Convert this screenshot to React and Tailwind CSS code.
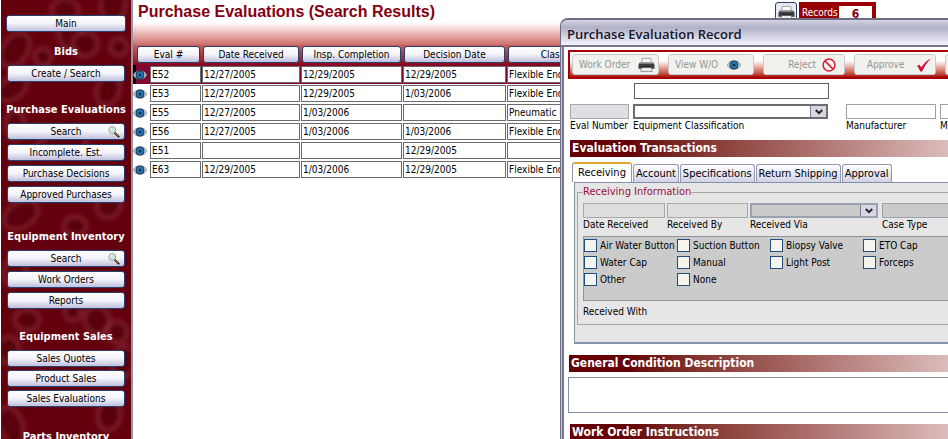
import React, { useState } from 'react';
import clsx from 'clsx';

const menuGroups = [
  { title: 'Bids', space: 'mt-2.5', gap: 'gap-1', items: ['Create / Search'] },
  { title: 'Purchase Evaluations', space: 'mt-[18px]', gap: 'gap-1', items: ['Search', 'Incomplete. Est.', 'Purchase Decisions', 'Approved Purchases'] },
  { title: 'Equipment Inventory', space: 'mt-6', gap: 'gap-1', items: ['Search', 'Work Orders', 'Reports'] },
  { title: 'Equipment Sales', space: 'mt-[18px]', gap: 'gap-[3px]', items: ['Sales Quotes', 'Product Sales', 'Sales Evaluations'] },
  { title: 'Parts Inventory', space: 'mt-5', gap: 'gap-[3px]', items: [] },
];

const columns = ['Eval #', 'Date Received', 'Insp. Completion', 'Decision Date', 'Classification'];

const rows = [
  ['E52', '12/27/2005', '12/29/2005', '12/29/2005', 'Flexible Endoscope'],
  ['E53', '12/27/2005', '12/29/2005', '1/03/2006', 'Flexible Endoscope'],
  ['E55', '12/27/2005', '1/03/2006', '', 'Pneumatic Equipment'],
  ['E56', '12/27/2005', '1/03/2006', '1/03/2006', 'Flexible Endoscope'],
  ['E51', '', '', '12/29/2005', ''],
  ['E63', '12/29/2005', '1/03/2006', '12/29/2005', 'Flexible Endoscope'],
];

const tabs = ['Receiving', 'Account', 'Specifications', 'Return Shipping', 'Approval'];

const receivedWith = [
  'Air Water Button', 'Suction Button', 'Biopsy Valve', 'ETO Cap',
  'Water Cap', 'Manual', 'Light Post', 'Forceps',
  'Other', 'None',
];

// rings of the sidebar texture: cx, cy, rx, ry, rotation
const rings = [
  [14, 50, 8, 14, 35], [64, 10, 9, 6, 0], [70, 36, 7, 12, -30], [84, 44, 8, 8, 0], [118, 47, 4, 4, 0], [42, 57, 4, 4, 0],
  [12, 88, 6, 12, 50], [107, 90, 7, 11, 20], [112, 6, 8, 10, 10], [14, 125, 5, 10, 0], [60, 145, 22, 7, -15],
  [108, 205, 7, 9, 40], [20, 215, 8, 14, 60], [74, 226, 7, 5, 0], [26, 320, 8, 6, 0], [96, 320, 8, 9, 0],
  [72, 312, 4, 4, 0], [14, 270, 6, 12, 20], [116, 332, 6, 6, 0], [108, 415, 7, 11, 10], [10, 425, 7, 14, -20],
  [122, 362, 6, 12, 10], [8, 350, 6, 9, 0],
];

const EyeIcon = ({ className }) => (
  <svg className={className} viewBox="0 0 14 10">
    <ellipse cx="7" cy="5" rx="6.300" ry="4" fill="#f0f4f6" stroke="#6f7d89" strokeWidth="0.900" />
    <circle cx="7" cy="5" r="4" fill="#2b79b8" stroke="#1b3550" strokeWidth="1.200" />
    <circle cx="7" cy="5" r="1.600" fill="#10385c" />
  </svg>
);

const PrinterIcon = ({ className }) => (
  <svg className={className} viewBox="0 0 18 16">
    <path d="M4.5 1h9l.8 5H3.7z" fill="#f6f6f6" stroke="#8b8b8b" strokeWidth="0.8" />
    <path d="M1.5 5.500h15l1 2.500v4h-17v-4z" fill="#3c4045" />
    <path d="M2 5.500h14l.6 1.500H1.400z" fill="#7d8287" />
    <path d="M4 10.500h10l1 4.500H3z" fill="#ececec" stroke="#777" strokeWidth="0.8" />
    <path d="M3.600 10h10.800" stroke="#111" strokeWidth="1" />
  </svg>
);

const MagnifierIcon = ({ className }) => (
  <svg className={className} viewBox="0 0 13 13">
    <path d="M7.500 7.500l4 4" stroke="#3c2a14" strokeWidth="2.200" strokeLinecap="round" />
    <path d="M7.200 7l3.500 3.500" stroke="#c08a3c" strokeWidth="0.9" />
    <circle cx="4.600" cy="4.400" r="3.600" fill="#cfe6dc" stroke="#9aa79f" strokeWidth="1.100" />
    <path d="M2.600 4a2 2 0 0 1 2-1.800" stroke="#fff" strokeWidth="0.9" fill="none" />
  </svg>
);

const RejectIcon = ({ className }) => (
  <svg className={className} viewBox="0 0 14 14">
    <circle cx="7" cy="7" r="5.900" fill="none" stroke="#dd1b2f" strokeWidth="1.500" />
    <path d="M2.900 2.900l8.200 8.200" stroke="#dd1b2f" strokeWidth="1.500" />
  </svg>
);

const ApproveIcon = ({ className }) => (
  <svg className={className} viewBox="0 0 16 15">
    <path d="M.5 8.500L3 7.300q1.600 1.500 2 3Q9 3.500 15.500.5 9.500 6 6 14.500H4Q2.800 10.500.5 8.500z" fill="#cf0f35" />
  </svg>
);

const Sidebar = () => (
  <aside className="relative w-[133px] shrink-0 overflow-hidden border-l border-r-2 border-l-white border-r-[#9a93a6] bg-[#64000e]">
    <svg className="absolute inset-0 h-[439px] w-full blur-[2px]" viewBox="0 0 130 439" preserveAspectRatio="none">
      {rings.map(([cx, cy, rx, ry, rot], i) => (
        <g key={i} transform={`rotate(${rot} ${cx} ${cy})`}>
          <ellipse cx={cx} cy={cy} rx={rx + 4} ry={ry + 4} fill="none" stroke="#9c3a48" strokeWidth="6" opacity="0.4" />
          <ellipse cx={cx} cy={cy} rx={rx} ry={ry} fill="#5f000d" stroke="#3f0006" strokeWidth="2" />
        </g>
      ))}
    </svg>
    <nav className="relative flex flex-col px-[5px] pt-[15px]">
      <MenuButton label="Main" />
      {menuGroups.map((group) => (
        <section key={group.title} className={clsx('flex flex-col', group.space)}>
          <h2 className="mb-[3px] h-5 text-center text-[11px] leading-5 font-bold whitespace-nowrap text-white">{group.title}</h2>
          <div className={clsx('flex flex-col px-px', group.gap)}>
            {group.items.map((item) => <MenuButton key={item} label={item} />)}
          </div>
        </section>
      ))}
    </nav>
  </aside>
);

const MenuButton = ({ label }) => (
  <button className="relative flex h-[17px] items-center justify-center rounded-[3px] border border-[#27406f] bg-linear-to-b from-white via-[#f3f3fa] to-[#bfc0dc] text-[10px] leading-3 text-black">
    {label}
    {label === 'Search' && <MagnifierIcon className="absolute right-1 size-3" />}
  </button>
);

const ResultsTable = () => (
  <table className="w-full table-fixed border-collapse text-[10px] leading-3">
    <colgroup>
      <col className="w-[17px]" />
      <col className="w-[52px]" />
      <col className="w-[99px]" />
      <col className="w-[102px]" />
      <col className="w-[104px]" />
      <col className="w-[128px]" />
      <col />
    </colgroup>
    <thead>
      <tr className="bg-linear-to-b from-[#c4605f] to-[#8a0018]">
        {columns.map((name, i) => (
          <th key={name} colSpan={i === 0 ? 2 : 1} className={clsx('pt-px pr-0.5 pb-0.5 font-normal', i === 0 ? 'pl-1' : 'pl-px')}>
            <button className="block h-[17px] w-full rounded-[3px] border border-[#27406f] bg-linear-to-b from-white via-[#f3f3fa] to-[#bfc0dc]">{name}</button>
          </th>
        ))}
        <th />
      </tr>
    </thead>
    <tbody>
      {rows.map((row, i) => (
        <tr key={row[0]} className={clsx(i === 0 && 'bg-[#82062f]')}>
          <td className={clsx('p-0', i === 0 && 'bg-linear-to-r from-black from-15% to-[#82062f] to-15%')}>
            <EyeIcon className="h-2.5 w-3.5" />
          </td>
          {row.map((value, j) => (
            <td key={j} className="py-px pr-px pl-0">
              <div className="h-[17px] overflow-hidden border border-[#6b6b6b] bg-white px-px leading-[15px] whitespace-nowrap">{value}</div>
            </td>
          ))}
          <td />
        </tr>
      ))}
    </tbody>
  </table>
);

const Field = ({ id, label, select, className, boxClass }) => (
  <div className={clsx('flex shrink-0 flex-col', className)}>
    <div className="relative flex">
      {select ? (
        <>
          <select id={id} className={clsx('h-[15px] w-full appearance-none border-2', boxClass)} />
          <span className="pointer-events-none absolute inset-y-0.5 right-0.5 flex w-4 items-center justify-center border-l border-[#7c7c92] bg-[#d6d6e4]">
            <svg className="h-1.5 w-2" viewBox="0 0 8 6"><path d="M.8 1L4 4.200 7.200 1" fill="none" stroke="#222" strokeWidth="2" /></svg>
          </span>
        </>
      ) : (
        <input id={id} type="text" className={clsx('h-[15px] w-full border px-1', boxClass)} />
      )}
    </div>
    <label htmlFor={id} className="text-[10px] leading-[14px] whitespace-nowrap">{label}</label>
  </div>
);

const SectionBar = ({ children }) => (
  <h3 className="h-[17px] bg-linear-to-r from-[#650006] from-15% to-[#dcbcbc] pl-0.5 text-[12px] leading-4 font-bold whitespace-nowrap text-white">{children}</h3>
);

const ToolButton = ({ children, className }) => (
  <button disabled className={clsx('flex h-[21px] shrink-0 items-center rounded-[3px] border border-[#c9c9c9] bg-[#f1f1ee] text-[10px] text-[#96968f]', className)}>
    {children}
  </button>
);

const RecordWindow = () => {
  const [tab, setTab] = useState('Receiving');

  return (
    <section className="absolute top-[18px] right-0 bottom-0 left-[560px] flex flex-col overflow-hidden rounded-tl-lg border-t-2 border-l border-[#6c6c84] bg-[#c9c9dc]">
      <h2 className="h-[27px] shrink-0 border-b-2 border-[#75758f] bg-linear-to-b from-[#d4d4e2] via-[#b0b0c8] via-30% to-[#f4f4fa] pl-1.5 font-['Open_Sans',sans-serif] text-[13px] leading-7 font-semibold text-[#15152b]">
        Purchase Evaluation Record
      </h2>
      <div className="ml-px flex-1 border-l-2 border-[#75758f] bg-white pt-[3px] pl-1">
        <div className="flex h-[29px] items-center gap-[9px] overflow-hidden border-2 border-r-0 border-[#a80006] bg-linear-to-b from-white from-35% to-[#a80006] pl-0.5">
          <ToolButton className="w-[87px] justify-between pr-[3px] pl-1.5">Work Order<PrinterIcon className="h-4 w-[17px]" /></ToolButton>
          <ToolButton className="w-[86px] justify-between pr-3 pl-1.5">View W/O<EyeIcon className="h-2.5 w-3.5" /></ToolButton>
          <ToolButton className="w-[82px] justify-end gap-1.5 pr-2">Reject<RejectIcon className="size-3.5" /></ToolButton>
          <ToolButton className="w-[82px] justify-between pr-[3px] pl-3">Approve<ApproveIcon className="h-3.5 w-4" /></ToolButton>
          <ToolButton className="w-[82px]" />
        </div>

        <div className="mt-1 flex pl-[66px]">
          <input aria-label="Record" type="text" className="h-4 w-[195px] border border-[#5f5f5f]" />
        </div>
        <div className="mt-[5px] flex pl-0.5">
          <Field id="eval" label="Eval Number" className="mr-1 w-[59px]" boxClass="border-[#a9a9a9] bg-[#dfdfe3]" />
          <Field id="class" label="Equipment Classification" select className="mr-[18px] w-[195px]" boxClass="border-[#6d6d6d] bg-white" />
          <Field id="maker" label="Manufacturer" className="mr-1 w-[90px]" boxClass="border-[#a0a0a0] bg-white" />
          <Field id="model" label="Model" className="w-[90px]" boxClass="border-[#a0a0a0] bg-white" />
        </div>

        <div className="mt-[7px] pl-0.5">
          <SectionBar>Evaluation Transactions</SectionBar>
        </div>

        <div role="tablist" className="mt-[5px] flex h-5 items-end gap-px pl-1">
          {tabs.map((name) => (
            <button
              key={name}
              role="tab"
              aria-selected={tab === name}
              onClick={() => setTab(name)}
              className={clsx(
                'shrink-0 rounded-t-[3px] border border-b-0 border-[#9298ad] text-[11px] leading-4 whitespace-nowrap',
                tab === name ? 'h-5 border-t-2 border-t-[#e9a534] bg-white px-[5px]' : 'h-[18px] bg-linear-to-b from-white to-[#d2d2e6] px-0.5'
              )}
            >
              {name}
            </button>
          ))}
        </div>

        <div className="ml-1.5 h-[162px] border border-r-0 border-b-2 border-[#8492a8] bg-[#e6e6e6] pt-px pl-0.5">
          <fieldset className="h-[141px] border border-r-0 border-[#a6a6a6] pl-[5px]">
            <legend className="h-4 text-[11px] leading-4 text-[#97103f]">Receiving Information</legend>
            <div className="mt-[3px] flex">
              <Field id="date" label="Date Received" className="mr-0.5 w-[82px]" boxClass="border-[#a9a9a9] bg-[#dedede]" />
              <Field id="by" label="Received By" className="mr-0.5 w-[81px]" boxClass="border-[#a9a9a9] bg-[#dedede]" />
              <Field id="via" label="Received Via" select className="mr-1 w-[128px]" boxClass="border-[#9aa3ad] bg-[#cacaca]" />
              <Field id="case" label="Case Type" className="w-[82px]" boxClass="border-[#9aa3ad] bg-[#cacaca]" />
            </div>
            <div className="mt-1 grid h-[65px] grid-cols-[repeat(4,93px)] content-start gap-y-1 overflow-hidden border border-r-0 border-[#939393] bg-[#cbcbcb] pt-0.5">
              {receivedWith.map((name) => (
                <label key={name} className="flex h-[13px] items-center gap-[3px] text-[10px] leading-3 whitespace-nowrap">
                  <input type="checkbox" className="size-[13px] shrink-0 appearance-none border border-[#1f4f7d] bg-[#f6f4ee] checked:bg-[#3b7fb8]" />
                  {name}
                </label>
              ))}
            </div>
            <p className="mt-1 text-[10px] leading-[14px]">Received With</p>
          </fieldset>
        </div>

        <div className="mt-[11px] pl-px">
          <SectionBar>General Condition Description</SectionBar>
        </div>
        <textarea aria-label="General Condition Description" className="mt-[5px] block h-9 w-full resize-none border border-r-0 border-[#8492a8]" />
        <div className="mt-[11px] pl-0.5">
          <SectionBar>Work Order Instructions</SectionBar>
        </div>
      </div>
    </section>
  );
};

const App = () => (
  <div className="relative flex h-screen overflow-hidden bg-white font-['DejaVu_Sans_Condensed','DejaVu_Sans',sans-serif] text-black">
    <Sidebar />
    <main className="min-w-0 flex-1">
      <header className="flex h-[45px] justify-between bg-linear-to-b from-white from-50% to-[#cc6d6b]">
        <h1 className="pt-0.5 pl-[5px] font-['Liberation_Sans',sans-serif] text-[16px] leading-5 font-bold whitespace-nowrap text-[#850010]">
          Purchase Evaluations (Search Results)
        </h1>
        <div className="mr-[72px] flex gap-0.5 pt-0.5">
          <button aria-label="Print" className="flex h-6 w-[22px] justify-center rounded-[3px] border border-[#27406f] bg-[#e9e9f3] pt-0.5">
            <PrinterIcon className="h-4 w-[17px]" />
          </button>
          <div className="flex h-6 w-[77px] justify-between bg-[#980006] pt-1 pr-1 pl-[3px] text-[10px] leading-[14px] text-white">
            Records
            <output className="w-[33px] bg-white text-center text-[12px] leading-4 font-bold text-[#850010]">6</output>
          </div>
        </div>
      </header>
      <ResultsTable />
    </main>
    <RecordWindow />
  </div>
);

export default App;
